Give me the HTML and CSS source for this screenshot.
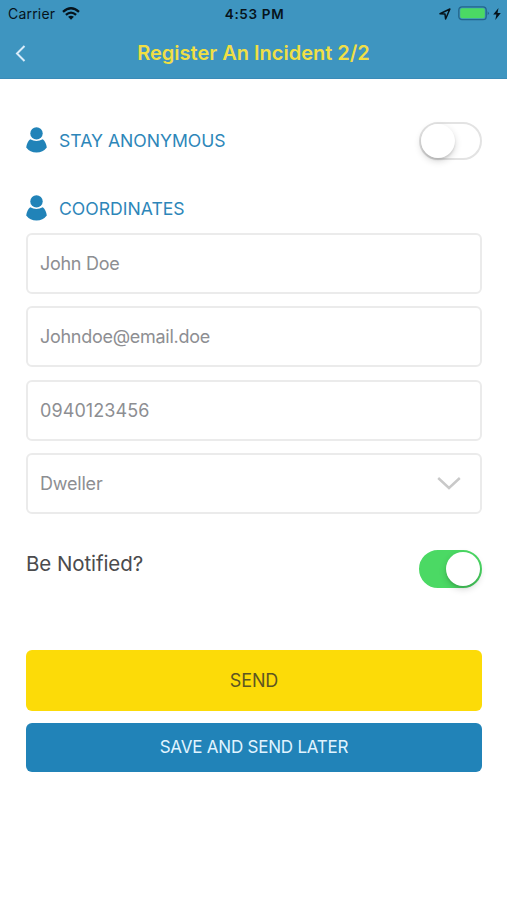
FILE: index.html
```
<!DOCTYPE html>
<html lang="en">
<head>
<meta charset="utf-8">
<title>Register An Incident</title>
<link rel="stylesheet" href="styles.css">
</head>
<body>
<header class="header">
  <div class="status">
    <div class="status-left">
      <span class="carrier">Carrier</span>
      <svg class="wifi" width="18" height="13" viewBox="0 0 18 13" fill="none" stroke="#06131b" stroke-width="2.3"><path d="M1 4.8Q9-2.3 17 4.8M3.9 7.9Q9 3.3 14.1 7.9"/><path d="M6.1 9.8Q9 7.5 11.9 9.8L9 12.7Z" fill="#06131b" stroke="none"/></svg>
    </div>
    <span class="time">4:53 PM</span>
    <div class="status-right">
      <svg width="12" height="12" viewBox="0 0 12 12" fill="none" stroke="#06131b" stroke-width="1.5" stroke-linejoin="round"><path d="M1 5.7 10.9 1 6.6 11 6 6.1Z"/></svg>
      <svg width="32" height="15" viewBox="0 0 32 15"><rect x=".8" y=".8" width="27.4" height="12.9" rx="3.2" fill="none" stroke="#24658a" stroke-width="1.3"/><rect x="2.2" y="2.2" width="24.6" height="10.1" rx="1.8" fill="#4bd964"/><path d="M29.6 5.2q2.6 2 0 4Z" fill="#24658a"/></svg>
      <svg class="bolt" width="8" height="12" viewBox="0 0 8 12" fill="#06131b"><path d="M5.5 0 .2 6.6H3.4L2.3 12 7.8 4.9H4.5Z"/></svg>
    </div>
  </div>
  <nav class="nav">
    <svg width="12" height="18" viewBox="0 0 12 18" fill="none" stroke="#d9ecfa" stroke-width="2"><path d="M10.5 2 3 9.5 10.5 17"/></svg>
    <h1 class="title">Register An Incident 2/2</h1>
  </nav>
</header>
<main class="content">
  <section class="row anonymous">
    <div class="heading">
      <svg width="22" height="26" viewBox="0 0 22 26" fill="#2183b8"><circle cx="10.5" cy="6.4" r="6.2"/><path d="M4.2 12.2Q10.3 15.8 16.8 12.2Q20.1 15 20.8 20.5Q17 25.5 10.5 25.5T.2 20.5Q.9 15 4.2 12.2Z"/></svg>
      <h2 class="label">STAY ANONYMOUS</h2>
    </div>
    <div class="toggle" role="switch" aria-checked="false"><span class="knob"></span></div>
  </section>
  <section class="heading coordinates">
    <svg width="22" height="26" viewBox="0 0 22 26" fill="#2183b8"><circle cx="10.5" cy="6.4" r="6.2"/><path d="M4.2 12.2Q10.3 15.8 16.8 12.2Q20.1 15 20.8 20.5Q17 25.5 10.5 25.5T.2 20.5Q.9 15 4.2 12.2Z"/></svg>
    <h2 class="label">COORDINATES</h2>
  </section>
  <div class="fields">
    <div class="field"><span class="name">John Doe</span></div>
    <div class="field"><span class="email">Johndoe@email.doe</span></div>
    <div class="field"><span class="phone">0940123456</span></div>
    <div class="field"><span class="kind">Dweller</span>
      <svg width="24" height="14" viewBox="0 0 24 14" fill="none" stroke="#c9c9c9" stroke-width="2.4"><path d="M1.2 2 12 12 22.8 2"/></svg>
    </div>
  </div>
  <section class="row notify">
    <span class="question">Be Notified?</span>
    <div class="toggle toggle-on" role="switch" aria-checked="true"><span class="knob"></span></div>
  </section>
  <div class="button send"><span>SEND</span></div>
  <div class="button later"><span>SAVE AND SEND LATER</span></div>
</main>
</body>
</html>
```
FILE: styles.css
```
* { box-sizing: border-box; }
body {
  margin: 0;
  background: #fff;
  font-family: Inter, "Liberation Sans", sans-serif;
  color: #4b4b4d;
}
svg { display: block; flex: none; }
h1, h2 { margin: 0; font-weight: 400; }
.header {
  height: 79px;
  background: #3e95c0;
  border-bottom: 1px solid #3a8bb8;
}
.status {
  height: 27px;
  display: grid;
  grid-template-columns: 1fr auto 1fr;
  align-items: center;
  padding: 0 6px 0 8px;
  color: #06131b;
  font-size: 14px;
}
.status-left, .status-right { display: flex; align-items: center; }
.status-left { gap: 7px; }
.carrier { letter-spacing: .2px; }
.time { font-size: 13.5px; font-weight: 600; letter-spacing: .65px; }
.status-right { justify-content: flex-end; gap: 7px; }
.bolt { margin-left: -4px; }
.nav {
  height: 51px;
  display: grid;
  grid-template-columns: 12px 1fr 12px;
  align-items: center;
  padding: 0 14px;
}
.title {
  text-align: center;
  color: #f0df45;
  font-size: 20px;
  font-weight: 600;
  line-height: 26px;
}
.content { padding: 43px 25px 0 26px; }
.row { display: flex; justify-content: space-between; }
.anonymous { height: 38px; }
.heading { display: flex; align-items: center; gap: 11px; height: 26px; }
.anonymous .heading { margin-top: 5px; }
.coordinates { margin-top: 35px; }
.label { color: #2d86b9; font-size: 17.6px; line-height: 24px; padding-top: 1px; }
.toggle {
  width: 63px;
  height: 38px;
  border-radius: 19px;
  border: 2px solid #e3e3e3;
  display: flex;
}
.knob {
  width: 34px;
  height: 34px;
  border-radius: 50%;
  background: #fff;
  box-shadow: 0 3px 7px #0000002b, 0 2px 2px #00000018;
}
.toggle-on { background: #4bd964; border-color: #4bd964; justify-content: flex-end; }
.fields { display: grid; gap: 12.3px; margin-top: 12px; }
.field {
  height: 61px;
  border: 2px solid #ebebeb;
  border-radius: 6px;
  display: flex;
  align-items: center;
  justify-content: space-between;
  padding: 0 19px 0 12px;
  color: #8d8e92;
  font-size: 18px;
}
.name, .email { letter-spacing: -.28px; }
.phone { letter-spacing: .08px; }
.kind { letter-spacing: -.2px; }
.notify { height: 38px; margin-top: 36px; align-items: flex-start; }
.question { font-size: 20.5px; line-height: 26px; letter-spacing: -.08px; padding-top: 1px; }
.button {
  display: flex;
  align-items: center;
  justify-content: center;
  border-radius: 6px;
}
.send { height: 61px; margin-top: 62px; background: #fcdb08; color: #5d5622; font-size: 18px; letter-spacing: -.1px; }
.later { height: 49px; margin-top: 12px; background: #2183b8; color: #e0f4ff; font-size: 17px; letter-spacing: -.22px; }
```
